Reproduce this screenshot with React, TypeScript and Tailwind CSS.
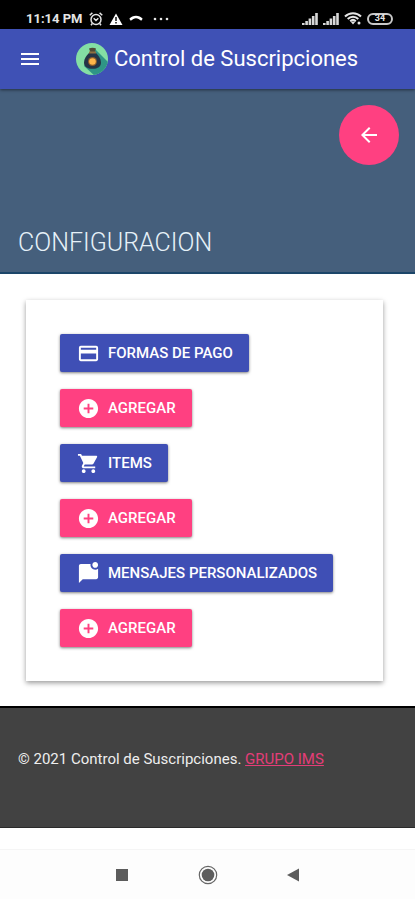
import { FC } from "react";
import { IconType } from "react-icons";
import {
  MdAddCircle,
  MdArrowBack,
  MdMarkChatUnread,
  MdMenu,
  MdPayment,
  MdShoppingCart,
} from "react-icons/md";

interface Action {
  label: string;
  icon: IconType;
  variant: "primary" | "accent";
}

const actions: Action[] = [
  { label: "FORMAS DE PAGO", icon: MdPayment, variant: "primary" },
  { label: "AGREGAR", icon: MdAddCircle, variant: "accent" },
  { label: "ITEMS", icon: MdShoppingCart, variant: "primary" },
  { label: "AGREGAR", icon: MdAddCircle, variant: "accent" },
  { label: "MENSAJES PERSONALIZADOS", icon: MdMarkChatUnread, variant: "primary" },
  { label: "AGREGAR", icon: MdAddCircle, variant: "accent" },
];

const variants = {
  primary: "bg-[#3f4fb5]",
  accent: "bg-[#ff4081]",
};

const SignalIcon: FC = () => (
  <svg viewBox="0 0 16 12" className="h-3 w-4" fill="#d8d8d8">
    <path d="M0 10h2.600v2H0zM3.300 8h2.600v4H3.300zM6.600 5.500h2.600V12H6.600zM9.900 3h2.600v9H9.900zM13.200 0h2.600v12h-2.600z" />
  </svg>
);

const StatusBar: FC = () => (
  <div className="flex h-[29px] items-center justify-between bg-black pt-2 pr-[22px] pl-[26px] text-[#e5e5e5]">
    <div className="flex items-center gap-1.5">
      <span className="text-[13px] leading-4 font-bold">11:14 PM</span>
      <svg viewBox="0 0 14 14" className="h-3.5 w-3.5" fill="none" stroke="currentColor" strokeWidth="1.5">
        <circle cx="7" cy="7.500" r="5" />
        <path d="M0.700 3.200 3.400 0.900M13.300 3.200 10.600 0.900M4.700 6.300 7 8.500l2.300-2.200M3.300 11.500 2 13.300M10.700 11.500 12 13.300" />
      </svg>
      <svg viewBox="0 0 14 12" className="h-3 w-3.5">
        <path d="M7 0.500 13.500 12H0.500z" fill="#fff" />
        <path d="M7 4v4M7 9v1.500" stroke="#000" strokeWidth="1.400" />
      </svg>
      <svg viewBox="0 0 14 12" className="h-3 w-3.5">
        <path
          d="M0.300 5.800C3.500 1.800 10.500 1.800 13.700 5.800L12.200 7.800 9.600 5.900C8 4.900 6 4.900 4.400 5.900L1.800 7.800z"
          fill="#fff"
        />
      </svg>
      <svg viewBox="0 0 16 4" className="ml-1 h-1 w-4" fill="#e5e5e5">
        <circle cx="2" cy="2" r="1.300" />
        <circle cx="8" cy="2" r="1.300" />
        <circle cx="14" cy="2" r="1.300" />
      </svg>
    </div>
    <div className="flex items-center gap-[5px]">
      <SignalIcon />
      <SignalIcon />
      <svg viewBox="0 0 18 13" className="h-[13px] w-[18px]" fill="none" stroke="#e5e5e5" strokeWidth="2">
        <path d="M1 4.500C5.500 0 12.500 0 17 4.500M3.700 7c3-3 7.600-3 10.600 0M6.200 9.200c1.600-1.500 4-1.500 5.600 0" />
        <path d="M6.500 9.500h5L9 12.500z" fill="#e5e5e5" stroke="none" />
        <circle cx="15" cy="11" r="1.500" fill="#e5e5e5" stroke="none" />
      </svg>
      <span className="flex h-3 w-[26px] items-center justify-center rounded-full border-2 border-[#c8c8c8] text-[9px] leading-none font-bold">
        34
      </span>
    </div>
  </div>
);

const Logo: FC = () => (
  <svg viewBox="0 0 32 32" className="h-8 w-8 shrink-0">
    <defs>
      <clipPath id="logo-disc">
        <circle cx="16" cy="16" r="16" />
      </clipPath>
    </defs>
    <g clipPath="url(#logo-disc)">
      <path d="M0 0h32v32H0z" fill="#84dfa4" />
      <path d="M19 6 34 21v13H20L8 23z" fill="#2f9586" />
    </g>
    <path d="M13 10h7c2.500 2.500 5 5.500 5 9.500 0 4-3 6.300-8.500 6.300S8 23.500 8 19.500c0-4 2.500-7 5-9.500z" fill="#253547" />
    <path d="M13 5.500c2-1 5-1 7 0l-1.300 3.500h-4.400z" fill="#4f4a35" />
    <path d="M13 8.500h7v2h-7z" fill="#8f7040" />
    <circle cx="16.500" cy="18.500" r="4.500" fill="#8b5d2c" />
    <circle cx="16.500" cy="18.500" r="3.300" fill="#ffb64a" />
  </svg>
);

const ActionButton: FC<{ action: Action }> = ({ action }) => {
  const Icon = action.icon;
  return (
    <button
      type="button"
      className={`flex h-[38px] items-center gap-2 rounded-xs px-4 text-[15px] font-medium text-white shadow-[0_1px_3px_rgba(0,0,0,0.5)] ${variants[action.variant]}`}
    >
      <span className="flex w-6 justify-center">
        <Icon className="h-[23px] w-[23px]" />
      </span>
      {action.label}
    </button>
  );
};

const NavBar: FC = () => (
  <nav className="mt-[21px] flex h-[50px] items-center justify-center gap-[62px] border-t border-[#f5f5f5] bg-[#fdfdfd]">
    <button type="button" aria-label="Recientes">
      <svg viewBox="0 0 24 24" className="h-6 w-6">
        <path d="M6 6h12v12H6z" fill="#5c5c5c" />
      </svg>
    </button>
    <button type="button" aria-label="Inicio">
      <svg viewBox="0 0 24 24" className="h-6 w-6">
        <circle cx="12" cy="12" r="8.700" fill="none" stroke="#666" strokeWidth="1.200" />
        <circle cx="12" cy="12" r="6.300" fill="#5c5c5c" />
      </svg>
    </button>
    <button type="button" aria-label="Volver">
      <svg viewBox="0 0 24 24" className="h-6 w-6">
        <path d="M5 12 17 5.500v13z" fill="#5c5c5c" />
      </svg>
    </button>
  </nav>
);

const App: FC = () => {
  return (
    <div className="min-h-screen bg-white font-['Roboto',sans-serif]">
      <StatusBar />

      <header className="relative flex h-[60px] items-center bg-[#3f51b5] pl-[18px] text-white shadow-[0_1px_3px_rgba(0,0,0,0.5)]">
        <button type="button" aria-label="Menú" className="mr-[34px]">
          <MdMenu className="h-6 w-6" />
        </button>
        <Logo />
        <h1 className="ml-1.5 text-[22px] leading-7 whitespace-nowrap">Control de Suscripciones</h1>
      </header>

      <main>
        <section className="flex h-[185px] flex-col justify-between border-b-2 border-[#1c4669] bg-[#455f7c] pt-4 pr-4 pb-[13px] pl-[18px]">
          <button
            type="button"
            aria-label="Atrás"
            className="flex h-[60px] w-[60px] items-center justify-center self-end rounded-full bg-[#ff4081] text-white"
          >
            <MdArrowBack className="h-6 w-6" />
          </button>
          <h2 className="text-[25px] leading-8 font-light text-[#e6f1f8]">CONFIGURACION</h2>
        </section>

        <section className="mt-[26px] mr-8 mb-[25px] ml-[26px] flex flex-col items-start gap-[17px] bg-white px-[34px] py-[34px] shadow-[0_2px_5px_rgba(0,0,0,0.4)]">
          {actions.map((action, i) => (
            <ActionButton key={i} action={action} />
          ))}
        </section>
      </main>

      <footer className="flex h-[122px] items-center border-t-2 border-b border-t-black border-b-[#2a2a2a] bg-[#424242] px-[18px] pb-4 text-[15px] text-[#eeeeee]">
        <p>
          © 2021 Control de Suscripciones.{" "}
          <a href="#" className="text-[#e43d78] underline">
            GRUPO IMS
          </a>
        </p>
      </footer>

      <NavBar />
    </div>
  );
};

export default App;
